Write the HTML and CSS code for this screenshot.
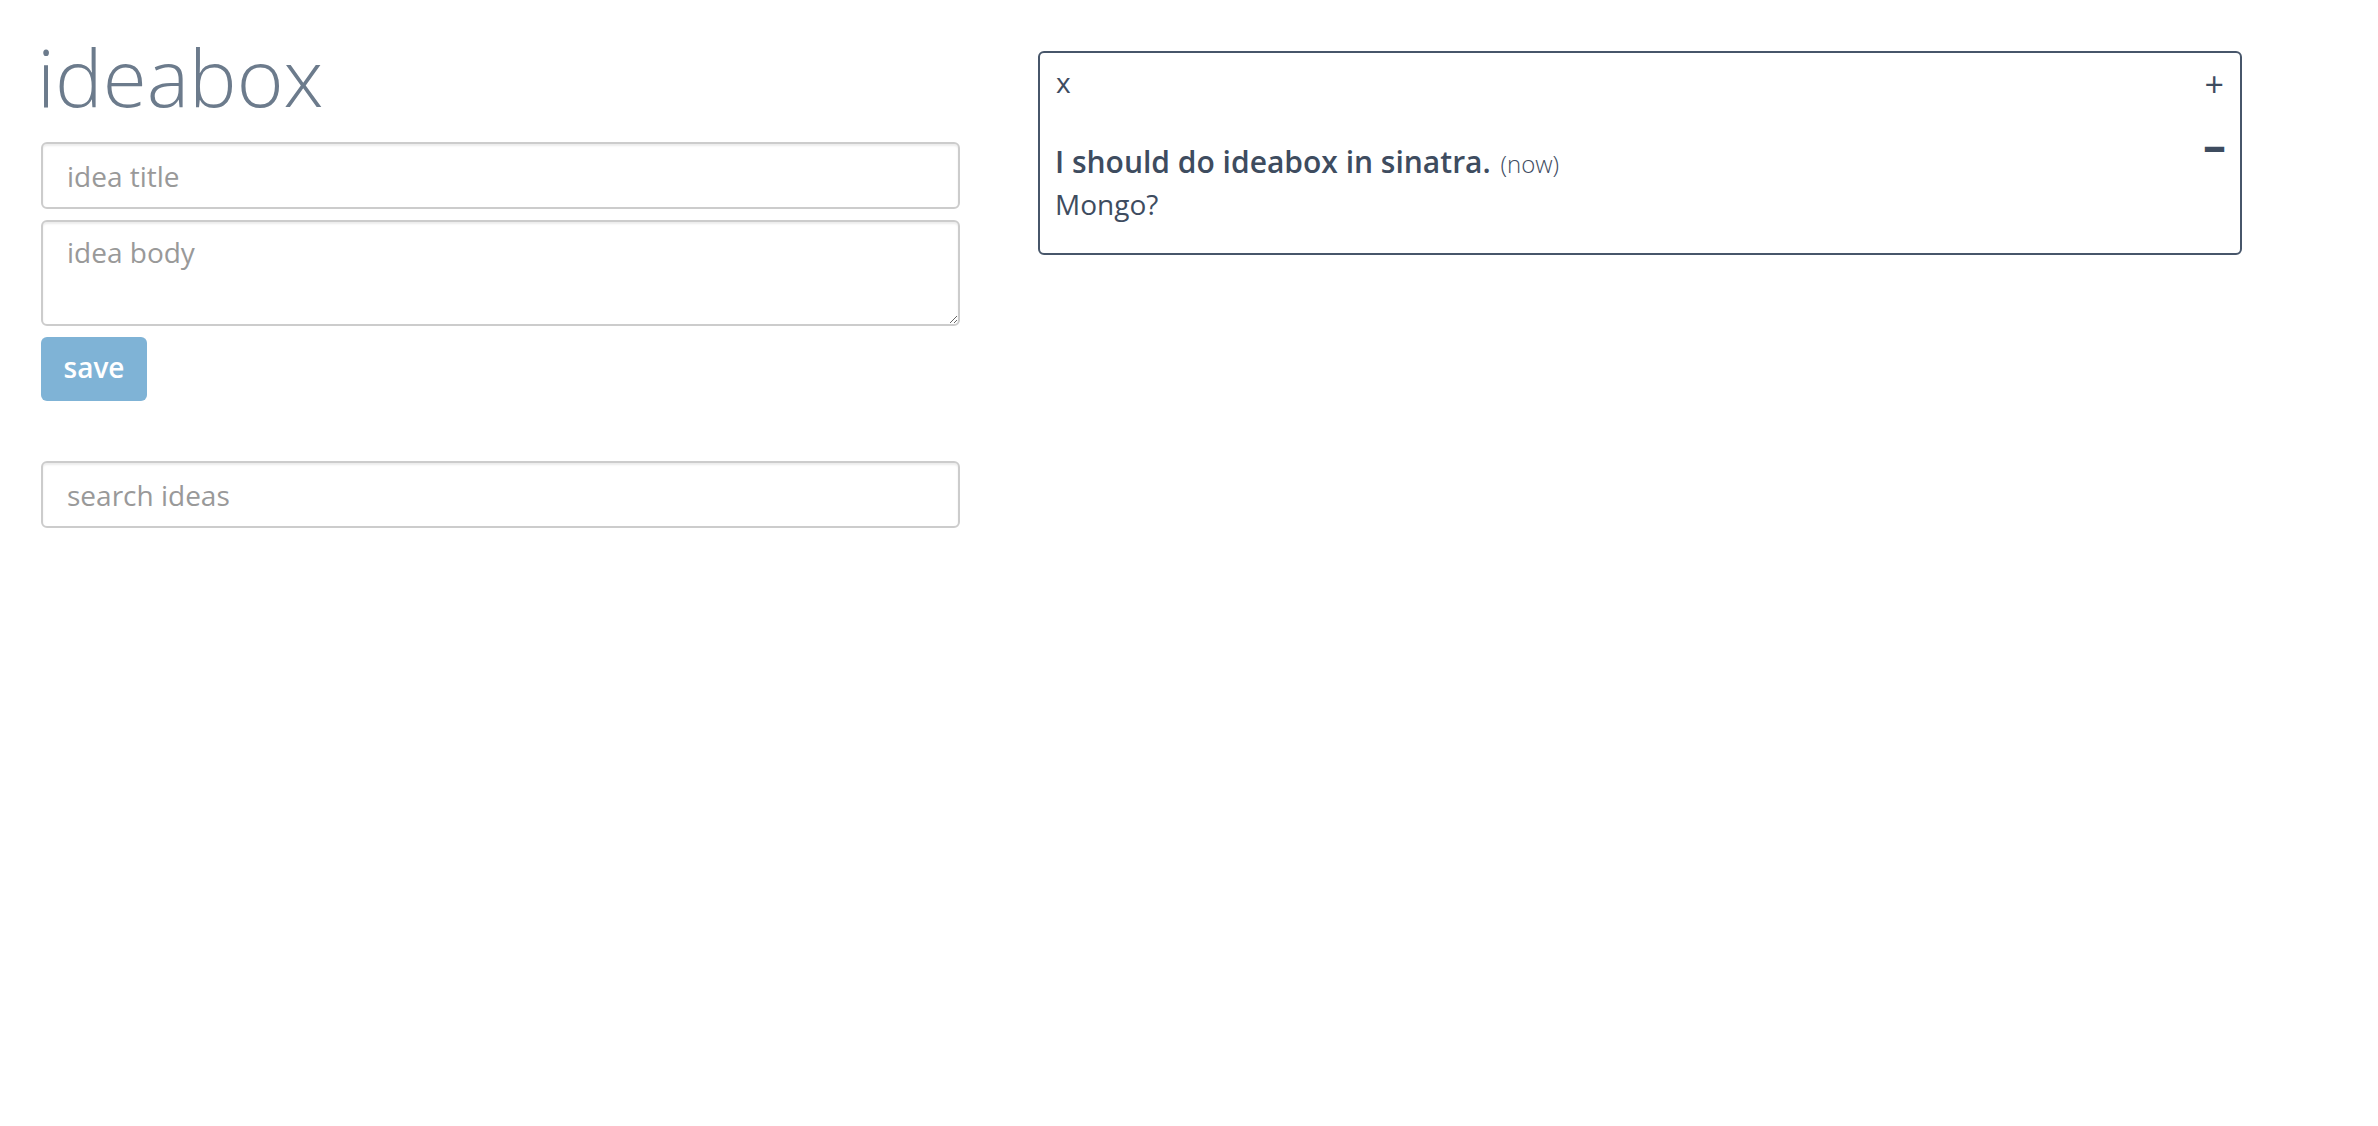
FILE: index.html
```html
<!DOCTYPE html>
<html lang="en">
<head>
<meta charset="utf-8">
<title>ideabox</title>
<link rel="stylesheet" href="styles.css">
</head>
<body>
<div class="page">
  <section class="left">
    <h1 class="brand">ideabox</h1>
    <form class="idea-form">
      <input class="field" type="text" placeholder="idea title">
      <textarea class="field area" placeholder="idea body"></textarea>
      <button class="save" type="button">save</button>
    </form>
    <input class="field search" type="text" placeholder="search ideas">
  </section>
  <section class="right">
    <article class="idea">
      <div class="idea-top">
        <span class="del">x</span>
        <span class="up">+</span>
      </div>
      <div class="idea-head">
        <span class="idea-line"><span class="idea-title">I should do ideabox in sinatra.</span> <span class="idea-time">(now)</span></span>
        <span class="down">&ndash;</span>
      </div>
      <p class="idea-body">Mongo?</p>
    </article>
  </section>
</div>
</body>
</html>
```

FILE: styles.css
```css
* { box-sizing: border-box; }
html, body { margin: 0; padding: 0; background: #fff; }
body { font-family: "Open Sans", "Noto Sans", sans-serif; color: #3e4c5f; }

.page {
  display: flex;
  align-items: flex-start;
  gap: 78px;
  padding: 36px 0 0 41px;
}

.left { width: 919px; display: flex; flex-direction: column; }

.brand {
  margin: 0 0 26px -4px;
  font-size: 80px;
  line-height: 80px;
  font-weight: 300;
  color: #6c7b8c;
}

.idea-form { display: flex; flex-direction: column; align-items: flex-start; }

.field {
  display: block;
  width: 100%;
  height: 67px;
  border: 2px solid #cccccc;
  border-radius: 6px;
  padding: 0 24px;
  font-family: "Open Sans", "Noto Sans", sans-serif;
  font-size: 28px;
  color: #555;
  background: #fff;
  box-shadow: inset 0 2px 2px rgba(0,0,0,0.075);
  outline: none;
}
.field::placeholder { color: #999999; }

.area {
  margin-top: 11px;
  height: 106px;
  padding-top: 10px;
  line-height: 40px;
  resize: vertical;
}

.save {
  margin-top: 11px;
  width: 106px;
  height: 64px;
  border: none;
  border-radius: 6px;
  background: #7fb3d6;
  color: #fff;
  font-family: "Open Sans", "Noto Sans", sans-serif;
  font-size: 28px;
  font-weight: 600;
  padding: 0 0 4px 0;
}

.search { margin-top: 60px; }

.right { padding-top: 15px; }

.idea {
  width: 1204px;
  height: 204px;
  border: 2px solid #47566a;
  border-radius: 6px;
  padding: 6px 16px 0 15px;
}

.idea-top {
  display: flex;
  justify-content: space-between;
  align-items: flex-start;
  font-size: 28px;
  line-height: 40px;
}
.del { margin-left: 1px; margin-top: 3px; }
.up { font-size: 34px; line-height: 40px; margin-top: 5px; }

.idea-head {
  display: flex;
  align-items: flex-start;
  margin-top: 38px;
}
.idea-line { font-size: 30px; line-height: 40px; }
.idea-title { font-weight: 600; }
.idea-time { font-size: 24px; font-weight: 300; margin-left: 2px; }
.down {
  margin-left: auto;
  margin-top: -8px;
  margin-right: -2px;
  font-weight: 700;
  font-size: 46px;
  line-height: 20px;
}

.idea-body { margin: 0; font-size: 28px; line-height: 40px; }
```
